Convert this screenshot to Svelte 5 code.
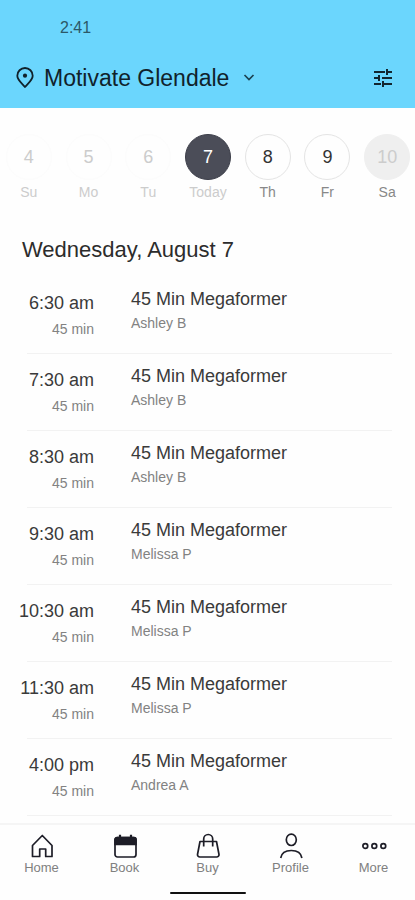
<script>
  const days = [
    { date: 4, label: 'Su', state: 'past' },
    { date: 5, label: 'Mo', state: 'past' },
    { date: 6, label: 'Tu', state: 'past' },
    { date: 7, label: 'Today', state: 'selected' },
    { date: 8, label: 'Th', state: 'open' },
    { date: 9, label: 'Fr', state: 'open' },
    { date: 10, label: 'Sa', state: 'closed' }
  ];

  const classes = [
    { time: '6:30 am', coach: 'Ashley B' },
    { time: '7:30 am', coach: 'Ashley B' },
    { time: '8:30 am', coach: 'Ashley B' },
    { time: '9:30 am', coach: 'Melissa P' },
    { time: '10:30 am', coach: 'Melissa P' },
    { time: '11:30 am', coach: 'Melissa P' },
    { time: '4:00 pm', coach: 'Andrea A' }
  ];

  const tabs = ['Home', 'Book', 'Buy', 'Profile', 'More'];
</script>

<div class="app">
  <header>
    <div class="status">2:41</div>
    <div class="bar">
      <button class="location">
        <svg width="18" height="22" viewBox="0 0 18 22" fill="none" stroke="#10222b" stroke-width="1.8" aria-hidden="true">
          <path d="M9 20C6 16.300 1.300 13 1.300 8.700a7.700 7.700 0 0 1 15.400 0c0 4.300-4.700 7.600-7.700 11.300z" stroke-linejoin="round" />
          <circle cx="9" cy="8.700" r="2.100" fill="#10222b" stroke="none" />
        </svg>
        <span>Motivate Glendale</span>
        <svg class="chevron" width="12" height="8" viewBox="0 0 12 8" fill="none" stroke="#1c4251" stroke-width="1.7" aria-hidden="true">
          <path d="M1.500 1 6 5.500 10.500 1" />
        </svg>
      </button>
      <button class="filter" aria-label="Filters">
        <svg width="20" height="20" viewBox="0 0 20 20" fill="none" stroke="#12262f" stroke-width="2" aria-hidden="true">
          <path d="M1 4h11M15 4h4M14 1v6M1 10h4M9 10h10M6 7v6M1 16h7M11 16h8M10 13v6" />
        </svg>
      </button>
    </div>
  </header>

  <main>
    <div class="days">
      {#each days as day}
        <button class="day {day.state}" disabled={day.state === 'past' || day.state === 'closed'}>
          <span class="date">{day.date}</span>
          <span class="name">{day.label}</span>
        </button>
      {/each}
    </div>

    <h1>Wednesday, August 7</h1>

    <ul>
      {#each classes as item}
        <li>
          <div class="when">
            <div class="time">{item.time}</div>
            <div class="small">45 min</div>
          </div>
          <div class="what">
            <div class="title">45 Min Megaformer</div>
            <div class="small">{item.coach}</div>
          </div>
        </li>
      {/each}
    </ul>
  </main>

  <footer>
    <nav>
      {#each tabs as tab}
        <a href="#{tab.toLowerCase()}">
          <svg width="26" height="26" viewBox="0 0 26 26" fill="none" stroke="#1d1d27" stroke-width="1.7" aria-hidden="true">
            {#if tab === 'Home'}
              <path d="M3.500 23.500V12.500L13.300 2.500 23 12.500v11h-6.300V16h-6v7.500z" stroke-linejoin="round" />
            {:else if tab === 'Book'}
              <rect x="3" y="4.500" width="21" height="19.500" rx="2.500" />
              <path d="M3 11.500V6.500a2 2 0 0 1 2-2h17a2 2 0 0 1 2 2v5z" fill="#1d1d27" />
              <path d="M8 1.800V5M19 1.800V5" stroke-width="2.2" />
            {:else if tab === 'Buy'}
              <path d="M5 8.500h16.500l2.500 13a2.300 2.300 0 0 1-2.300 2.500H4.800a2.300 2.300 0 0 1-2.300-2.500z" stroke-linejoin="round" />
              <path d="M8.700 13.500V6a4.500 4.500 0 0 1 9 0v7.500" />
            {:else if tab === 'Profile'}
              <ellipse cx="13.300" cy="6.800" rx="5" ry="5.700" />
              <path d="M2.700 25c.8-5 4.500-7.500 10.600-7.500s9.800 2.500 10.600 7.500" />
            {:else}
              <circle cx="4.300" cy="13" r="2.400" />
              <circle cx="13.300" cy="13" r="2.400" />
              <circle cx="22.300" cy="13" r="2.400" />
            {/if}
          </svg>
          <span>{tab}</span>
        </a>
      {/each}
    </nav>
    <div class="handle"></div>
  </footer>
</div>

<style>
  :global(body) {
    margin: 0;
    background: #fefefe;
  }

  .app {
    display: flex;
    flex-direction: column;
    height: 100vh;
    overflow: hidden;
    background: #fefefe;
    color: #3a3a3a;
    font-family: 'Liberation Sans', Arial, sans-serif;
  }

  button {
    padding: 0;
    border: 0;
    background: none;
    font: inherit;
    color: inherit;
  }

  header {
    flex: none;
    padding: 18px 22px 14px 16px;
    background: #6bd6fd;
  }

  .status {
    padding-left: 44px;
    font-size: 16px;
    line-height: 20px;
    color: #2c5868;
  }

  .bar {
    display: flex;
    align-items: center;
    justify-content: space-between;
    padding-top: 24px;
  }

  .location {
    display: flex;
    align-items: center;
    gap: 10px;
    font-size: 23px;
    line-height: 32px;
    color: #10222b;
  }

  .chevron {
    margin-left: 4px;
  }

  .filter {
    display: flex;
  }

  main {
    flex: 1;
    min-height: 0;
    overflow: hidden;
  }

  .days {
    display: grid;
    grid-template-columns: repeat(7, 1fr);
    margin: 26px -2px 0 -1px;
  }

  .day {
    display: flex;
    flex-direction: column;
    align-items: center;
    gap: 4px;
    color: #333;
  }

  .date {
    box-sizing: border-box;
    width: 46px;
    height: 46px;
    border: 1px solid #e4e4e4;
    border-radius: 50%;
    font-size: 18px;
    line-height: 44px;
  }

  .name {
    font-size: 14px;
    line-height: 16px;
    color: #888;
  }

  .past .date {
    border-color: #fcfcfc;
    color: #ccc;
  }

  .past .name,
  .selected .name {
    color: #ccc;
  }

  .selected .date {
    border-color: #3c3e49;
    background: #4b4d58;
    color: #fff;
  }

  .closed .date {
    border-color: #efefef;
    background: #efefef;
    color: #ccc;
  }

  h1 {
    margin: 34px 22px 11px;
    font-size: 22px;
    font-weight: 400;
    line-height: 32px;
    color: #2c2c2c;
  }

  ul {
    margin: 0 23px 0 27px;
    padding: 0;
    list-style: none;
  }

  li {
    display: flex;
    gap: 37px;
    box-sizing: border-box;
    height: 77px;
    border-bottom: 1px solid #f2f2f2;
  }

  .when {
    display: flex;
    flex-direction: column;
    align-items: flex-end;
    gap: 8px;
    width: 67px;
    padding-top: 16px;
    white-space: nowrap;
  }

  .what {
    display: flex;
    flex-direction: column;
    gap: 6px;
    padding-top: 12px;
  }

  .time,
  .title {
    font-size: 18px;
    line-height: 20px;
  }

  .small {
    font-size: 14px;
    line-height: 16px;
    color: #828282;
  }

  footer {
    flex: none;
    border-top: 2px solid #f5f5f5;
  }

  nav {
    display: grid;
    grid-template-columns: repeat(5, 1fr);
    padding-top: 8px;
  }

  nav a {
    display: flex;
    flex-direction: column;
    align-items: center;
    gap: 1px;
    font-size: 13px;
    line-height: 16px;
    color: #808080;
    text-decoration: none;
  }

  .handle {
    width: 76px;
    height: 2px;
    margin: 16px auto 6px;
    border-radius: 1px;
    background: #111;
  }
</style>
